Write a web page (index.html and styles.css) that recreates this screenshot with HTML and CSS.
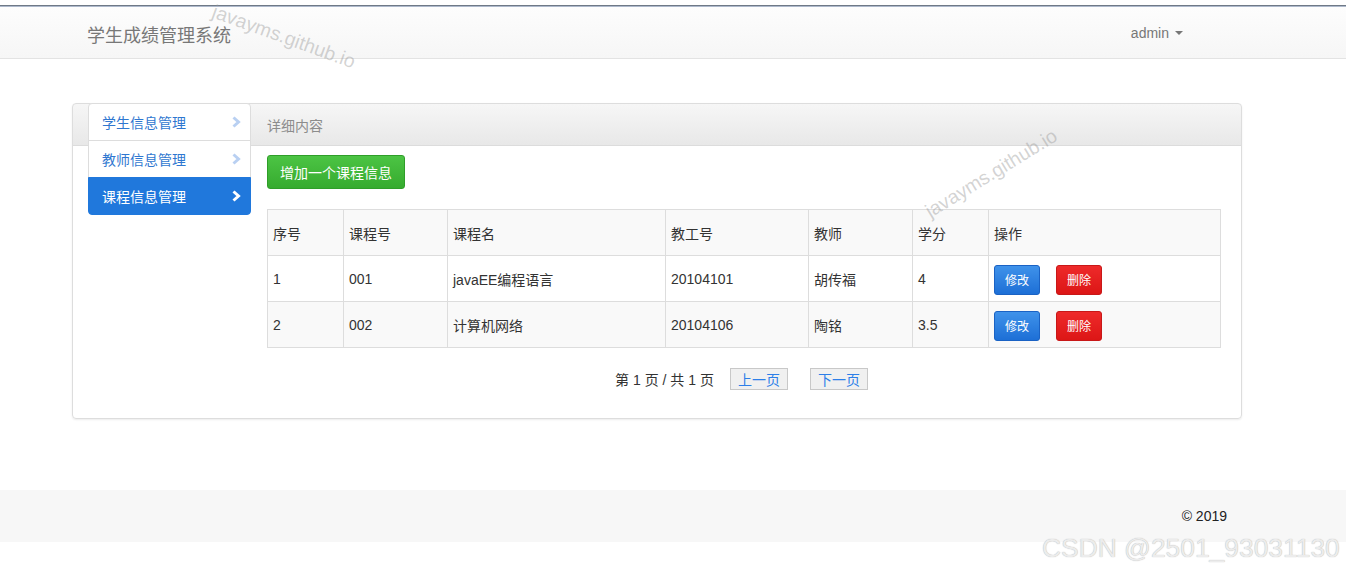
FILE: index.html
```html
<!DOCTYPE html>
<html lang="zh-CN">
<head>
<meta charset="utf-8">
<title>学生成绩管理系统</title>
<link rel="stylesheet" href="styles.css">
</head>
<body>
<div class="topline"></div>
<nav class="navbar">
  <div class="nav-inner">
    <span class="brand">学生成绩管理系统</span>
    <span class="user">admin <span class="caret"></span></span>
  </div>
</nav>

<main class="page">
  <section class="panel">
    <aside class="side">
      <a class="item first">学生信息管理<svg class="chev" viewBox="0 0 10 12" width="10" height="12"><path d="M2.5 1.5 L7.5 6 L2.5 10.5" fill="none" stroke="currentColor" stroke-width="3"/></svg></a>
      <a class="item">教师信息管理<svg class="chev" viewBox="0 0 10 12" width="10" height="12"><path d="M2.5 1.5 L7.5 6 L2.5 10.5" fill="none" stroke="currentColor" stroke-width="3"/></svg></a>
      <a class="item active last">课程信息管理<svg class="chev" viewBox="0 0 10 12" width="10" height="12"><path d="M2.5 1.5 L7.5 6 L2.5 10.5" fill="none" stroke="currentColor" stroke-width="3"/></svg></a>
    </aside>
    <div class="main">
      <div class="heading">详细内容</div>
      <div class="body">
        <button class="btn-add">增加一个课程信息</button>
        <table class="grid">
          <thead>
            <tr><td class="c1">序号</td><td class="c2">课程号</td><td class="c3">课程名</td><td class="c4">教工号</td><td class="c5">教师</td><td class="c6">学分</td><td>操作</td></tr>
          </thead>
          <tbody>
            <tr class="odd"><td>1</td><td>001</td><td>javaEE编程语言</td><td>20104101</td><td>胡传福</td><td>4</td><td><span class="ops"><button class="btn-edit">修改</button><button class="btn-del">删除</button></span></td></tr>
            <tr class="even"><td>2</td><td>002</td><td>计算机网络</td><td>20104106</td><td>陶铭</td><td>3.5</td><td><span class="ops"><button class="btn-edit">修改</button><button class="btn-del">删除</button></span></td></tr>
          </tbody>
        </table>
        <div class="pager">
          <span class="pinfo">第 1 页 / 共 1 页</span>
          <a class="pbtn">上一页</a>
          <a class="pbtn">下一页</a>
        </div>
      </div>
    </div>
  </section>
</main>

<footer class="footer">
  <span class="copy">© 2019</span>
</footer>

<div class="wm wm1">javayms.github.io</div>
<div class="wm wm2">javayms.github.io</div>
<div class="csdn">CSDN @2501_93031130</div>
</body>
</html>
```

FILE: styles.css
```css
html, body {
  margin: 0;
  padding: 0;
  background: #fff;
}
body {
  font-family: "Liberation Sans", Arial, "Noto Sans CJK SC", sans-serif;
  font-size: 14px;
  color: #333;
  position: relative;
  min-height: 570px;
}

.topline {
  height: 7px;
  background: linear-gradient(to bottom, #fff 0, #fff 5px, #6f7986 5px, #6f7986 6px, #aeb9cc 6px, #aeb9cc 7px);
}

.navbar {
  height: 51px;
  background: linear-gradient(to bottom, #fdfdfd 0, #f6f6f6 100%);
  border-bottom: 1px solid #e3e3e3;
}
.nav-inner {
  width: 1096px;
  margin-left: 87px;
  height: 51px;
  display: flex;
  align-items: center;
  justify-content: space-between;
}
.brand {
  font-size: 18px;
  color: #777;
  padding-top: 2px;
}
.user {
  color: #777;
  font-size: 14px;
  display: flex;
  align-items: center;
  gap: 6px;
}
.caret {
  display: inline-block;
  width: 0;
  height: 0;
  border-top: 4px solid #777;
  border-left: 4px solid transparent;
  border-right: 4px solid transparent;
  margin-top: 1px;
}

.page {
  padding-top: 44px;
}
.panel {
  margin-left: 72px;
  width: 1170px;
  box-sizing: border-box;
  border: 1px solid #ddd;
  border-radius: 4px;
  box-shadow: 0 1px 2px rgba(0,0,0,.08);
  background: linear-gradient(to bottom, #f6f6f6 0, #e8e8e8 41px, #dcdcdc 41px, #dcdcdc 42px, #fff 42px);
  display: flex;
  align-items: flex-start;
}

.side {
  width: 163px;
  margin-left: 15px;
  margin-top: -1px;
  display: flex;
  flex-direction: column;
}
.item {
  height: 36px;
  border: 1px solid #ddd;
  margin-bottom: -1px;
  background: #fff;
  color: #2f77d0;
  display: flex;
  align-items: center;
  justify-content: space-between;
  padding: 0 9px 0 13px;
  font-family: "Noto Sans CJK SC", sans-serif;
  font-size: 14px;
}
.item .chev {
  color: #b9d0f2;
}
.item.first {
  border-radius: 4px 4px 0 0;
}
.item.last {
  border-radius: 0 0 4px 4px;
  margin-bottom: 0;
}
.item.active {
  background: #2078dc;
  border-color: #2078dc;
  color: #fff;
}
.item.active .chev {
  color: #fff;
}

.main {
  flex: 1;
}
.heading {
  height: 42px;
  display: flex;
  align-items: center;
  padding-left: 16px;
  color: #8c8c8c;
  font-family: "Noto Sans CJK SC", sans-serif;
  font-size: 14px;
}
.body {
  padding: 9px 19px 28px 16px;
}

.btn-add {
  width: 138px;
  height: 34px;
  border: 1px solid #2f9e29;
  border-radius: 3px;
  background: linear-gradient(to bottom, #4cc444 0, #36ab2f 100%);
  color: #fff;
  font-family: "Noto Sans CJK SC", sans-serif;
  font-size: 14px;
  padding: 0;
  display: block;
}

.grid {
  margin-top: 20px;
  width: 954px;
  border-collapse: collapse;
  font-size: 14px;
  color: #333;
}
.grid td {
  border: 1px solid #ddd;
  height: 45px;
  padding: 0 5px;
  vertical-align: middle;
  font-family: "Liberation Sans", "Noto Sans CJK SC", sans-serif;
}
.grid thead tr { background: #f9f9f9; }
.grid tr.odd { background: #fff; }
.grid tr.even { background: #f9f9f9; }
.c1 { width: 65px; }
.c2 { width: 93px; }
.c3 { width: 207px; }
.c4 { width: 132px; }
.c5 { width: 93px; }
.c6 { width: 65px; }

.ops {
  display: flex;
  gap: 16px;
  padding-top: 2px;
}
.btn-edit, .btn-del {
  width: 46px;
  height: 30px;
  padding: 0;
  border-radius: 3px;
  color: #fff;
  font-family: "Noto Sans CJK SC", sans-serif;
  font-size: 12px;
}
.btn-edit {
  border: 1px solid #1a62c4;
  background: linear-gradient(to bottom, #3f92ea 0, #1d6fd6 100%);
}
.btn-del {
  border: 1px solid #c81818;
  background: linear-gradient(to bottom, #ee2a2a 0, #dc1616 100%);
}

.pager {
  margin-top: 20px;
  display: flex;
  justify-content: center;
  align-items: center;
  padding-right: 6px;
}
.pinfo {
  font-family: "Liberation Sans", "Noto Sans CJK SC", sans-serif;
  margin-right: 16px;
}
.pbtn {
  width: 56px;
  height: 20px;
  border: 1px solid #c8c8c8;
  background: #f0f0f0;
  color: #2d7fe8;
  font-family: "Noto Sans CJK SC", sans-serif;
  font-size: 14px;
  display: flex;
  align-items: center;
  justify-content: center;
  line-height: 1;
}
.pbtn + .pbtn {
  margin-left: 22px;
}

.footer {
  margin-top: 71px;
  height: 52px;
  background: #f7f7f7;
  display: flex;
  justify-content: flex-end;
  align-items: center;
  padding-right: 119px;
}
.copy {
  font-size: 14px;
  color: #222;
}

.wm {
  position: absolute;
  font-family: "Liberation Sans", Arial, sans-serif;
  font-size: 19.5px;
  color: rgba(150,150,150,.42);
  white-space: nowrap;
  transform-origin: 0 0;
  pointer-events: none;
}
.wm1 {
  left: 217px;
  top: 0px;
  transform: rotate(20deg);
}
.wm2 {
  left: 921px;
  top: 203px;
  transform: rotate(-31.5deg);
}

.csdn {
  position: absolute;
  left: 1042px;
  top: 533px;
  font-family: "Liberation Sans", Arial, sans-serif;
  font-size: 26.4px;
  color: #ececec;
  text-shadow: 0 0 1px #a8a8a8;
  white-space: nowrap;
}
```
